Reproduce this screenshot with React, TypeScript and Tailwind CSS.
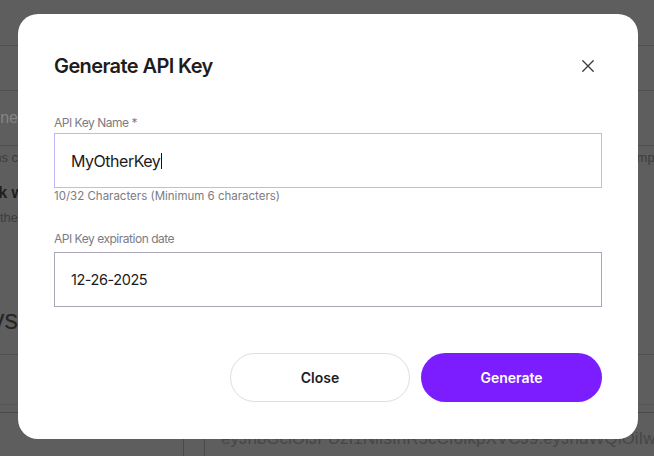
import React from "react";

export default function App() {
  return (
    <div className="relative w-[654px] h-[456px] overflow-hidden bg-[#5e5e5e] font-['Liberation_Sans',sans-serif]">
      {/* Background page (dimmed) */}
      <div className="h-[46px] border-b border-[#4f4f4f]" />
      <div className="h-[45px] border-b border-[#4f4f4f]" />
      <div className="h-[55px] border-b border-[#4f4f4f] flex items-center">
        <div className="w-[18px] shrink-0 flex justify-end whitespace-nowrap text-[16px] text-[#858585]">Filter by Machine</div>
      </div>
      <div className="h-[24px] flex items-center">
        <div className="w-[18px] shrink-0 flex justify-end whitespace-nowrap text-[13px] text-[#3d3d3d]">Create access tokens c</div>
        <div className="ml-[615px] shrink-0 whitespace-nowrap text-[13px] text-[#3d3d3d]">Import</div>
      </div>
      <div className="mt-[12px] h-[22px] flex items-center">
        <div className="w-[24px] shrink-0 flex justify-end whitespace-nowrap text-[16px] font-semibold text-[#1e1e1e]">Link w</div>
      </div>
      <div className="mt-[4px] h-[20px] flex items-center">
        <div className="w-[18px] shrink-0 flex justify-end whitespace-nowrap text-[13px] text-[#3d3d3d]">Sign in with eithe</div>
      </div>
      <div className="mt-[76px] h-[32px] flex items-center">
        <div className="w-[18px] shrink-0 flex justify-end whitespace-nowrap text-[27px] text-[#252525]">API Keys</div>
      </div>
      <div className="h-[19px] border-b border-[#4f4f4f]" />
      <div className="h-[50px] border-b border-[#555555]" />
      <div className="h-[8px] border-b border-[#4a4a4a]" />
      <div className="flex h-[43px]">
        <div className="w-[184px] shrink-0 border-r border-[#4a4a4a]" />
        <div className="w-[21px] shrink-0 border-r border-[#4a4a4a]" />
        <div className="shrink-0 pl-[16px] pt-[16px] leading-[20px] text-[17px] whitespace-nowrap text-[#474747]">
          eyJhbGciOiJFUzI1NiIsInR5cCI6IkpXVCJ9.eyJhdWQiOiIwNzhjYTk
        </div>
      </div>

      {/* Modal */}
      <div className="absolute left-[18px] top-[14px] w-[620px] h-[425px] bg-white rounded-[20px] px-9 pt-[38px] font-['Inter',sans-serif]">
        <div className="h-7 flex items-center justify-between">
          <h2 className="text-[20px] leading-7 font-semibold tracking-[-0.03em] text-[#1d1c22]">Generate API Key</h2>
          <button className="w-6 h-6 flex items-center justify-center mr-[2px]">
            <svg width="12" height="12" viewBox="0 0 12 12" fill="none" stroke="#3a3a42" strokeWidth="1.3" strokeLinecap="round">
              <path d="M0.8 0.8L11.2 11.2M11.2 0.8L0.8 11.2" />
            </svg>
          </button>
        </div>

        <div className="mt-[35px] text-[12px] leading-4 tracking-[-0.04em] text-[#7c7b84]">API Key Name *</div>
        <div className="mt-[2px] h-[55px] border border-[#c6b5fc] flex items-center pl-4">
          <span className="text-[16px] tracking-[-0.03em] text-[#1c1b20]">MyOtherKey</span>
          <span className="ml-px w-px h-[16px] bg-[#111]" />
        </div>
        <div className="text-[11.5px] leading-4 text-[#7c7b84]">10/32 Characters (Minimum 6 characters)</div>

        <div className="mt-[27px] text-[12px] leading-4 tracking-[-0.04em] text-[#7c7b84]">API Key expiration date</div>
        <div className="mt-[5px] h-[55px] border border-[#aaa6b7] flex items-center pl-4">
          <span className="text-[14.5px] tracking-[-0.03em] text-[#1c1b20]">12-26-2025</span>
        </div>

        <div className="mt-[46px] flex justify-end gap-[11px]">
          <button className="w-[180px] h-[49px] rounded-full border border-[#dedbe8] text-[14px] font-semibold text-[#1d1c22]">
            Close
          </button>
          <button className="w-[181px] h-[49px] rounded-full bg-[#7b1dff] text-[14px] font-semibold text-white">
            Generate
          </button>
        </div>
      </div>
    </div>
  );
}
